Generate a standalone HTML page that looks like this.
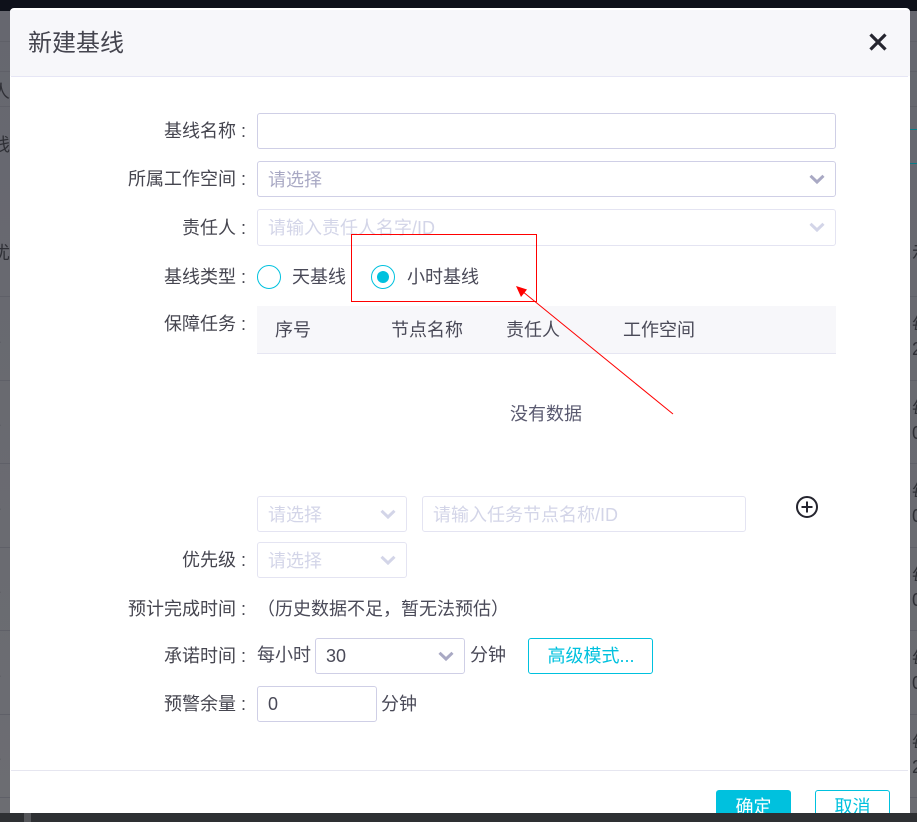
<!DOCTYPE html>
<html lang="zh">
<head>
<meta charset="utf-8">
<title>新建基线</title>
<style>
html,body{margin:0;padding:0;width:917px;height:822px;overflow:hidden;background:#6b6c72}
body{position:relative;font-family:"Liberation Sans","Noto Sans CJK SC",sans-serif;font-size:18px;color:#4a4a58}
.a{position:absolute}
.t{position:absolute;white-space:nowrap;line-height:26px;height:26px}
.l{position:absolute;right:671px;white-space:nowrap;line-height:26px;height:26px;color:#45454f}
.b{position:absolute;box-sizing:border-box;background:#fff;border:1px solid #cfcfe6;border-radius:3px}
.d{border-color:#e4e4f2}
.ph{color:#a9a9c4}
.ph2{color:#d3d5e8}
svg{position:absolute;overflow:visible}
.bgt{position:absolute;white-space:nowrap;color:#2f3036;line-height:24px}
.bgl{position:absolute;height:1px;background:#5f6068}
</style>
</head>
<body>
<!-- backdrop -->
<div class="a" style="left:0;top:0;width:917px;height:11px;background:#0e111a"></div>
<div class="a" style="left:0;top:11px;width:917px;height:802px;background:linear-gradient(#66676f,#6c6d72)"></div>
<div class="a" style="left:0;top:813px;width:917px;height:9px;background:#2e3033"></div>
<div class="a" style="left:24px;top:813px;width:7px;height:9px;background:#55565a"></div>
<div class="bgl" style="left:0;top:41px;width:917px"></div>
<div class="bgl" style="left:0;top:71px;width:917px"></div>
<div class="bgl" style="left:0;top:106px;width:917px"></div>
<div class="bgl" style="left:0;top:296px;width:917px"></div>
<div class="bgl" style="left:0;top:380px;width:917px"></div>
<div class="bgl" style="left:0;top:463px;width:917px"></div>
<div class="bgl" style="left:0;top:547px;width:917px"></div>
<div class="bgl" style="left:0;top:630px;width:917px"></div>
<div class="bgl" style="left:0;top:714px;width:917px"></div>
<div class="bgl" style="left:0;top:797px;width:917px"></div>
<div class="bgt" style="left:-8px;top:80px">人</div>
<div class="bgt" style="left:-8px;top:133px">线</div>
<div class="bgt" style="left:-8px;top:241px">优</div>
<div class="bgt" style="left:-9px;top:325px">1</div>
<div class="bgt" style="left:-9px;top:408px">1</div>
<div class="bgt" style="left:-9px;top:492px">1</div>
<div class="bgt" style="left:-9px;top:575px">1</div>
<div class="bgt" style="left:-9px;top:659px">1</div>
<div class="bgt" style="left:-9px;top:742px">1</div>
<div class="a" style="left:900px;top:129px;width:30px;height:35px;box-sizing:border-box;border:1px solid #0a7c88;border-radius:2px"></div>
<div class="bgt" style="left:912px;top:241px">示</div>
<div class="bgt" style="left:912px;top:313px">每</div><div class="bgt" style="left:912px;top:337px">2</div>
<div class="bgt" style="left:912px;top:397px">每</div><div class="bgt" style="left:912px;top:421px">0</div>
<div class="bgt" style="left:912px;top:480px">每</div><div class="bgt" style="left:912px;top:504px">0</div>
<div class="bgt" style="left:912px;top:564px">每</div><div class="bgt" style="left:912px;top:588px">0</div>
<div class="bgt" style="left:912px;top:647px">每</div><div class="bgt" style="left:912px;top:671px">0</div>
<div class="bgt" style="left:912px;top:731px">每</div><div class="bgt" style="left:912px;top:755px">2</div>

<!-- modal -->
<div class="a" style="left:10px;top:8px;width:900px;height:805px;background:#fff;border-radius:4px 4px 0 0;overflow:hidden">
  <div class="a" style="left:0;top:2px;width:900px;height:66px;background:#f7f7fa"></div>
  <div class="a" style="left:1px;top:68px;width:897px;height:1px;background:#e6e6f5"></div>
  <div class="a" style="left:1px;top:762px;width:897px;height:1px;background:#e6e6f0"></div>
</div>
<div class="t" style="left:28px;top:28px;font-size:24px;line-height:32px;height:32px;color:#45454f">新建基线</div>
<svg style="left:869px;top:33px" width="18" height="18" viewBox="0 0 18 18"><path d="M1.500 1.500 16.500 16.500M16.500 1.500 1.500 16.500" stroke="#25252f" stroke-width="3.200" fill="none"/></svg>

<!-- labels -->
<div class="l" style="top:118px">基线名称 :</div>
<div class="l" style="top:166px">所属工作空间 :</div>
<div class="l" style="top:215px">责任人 :</div>
<div class="l" style="top:264px">基线类型 :</div>
<div class="l" style="top:311px">保障任务 :</div>
<div class="l" style="top:547px">优先级 :</div>
<div class="l" style="top:596px">预计完成时间 :</div>
<div class="l" style="top:643px">承诺时间 :</div>
<div class="l" style="top:691px">预警余量 :</div>

<!-- fields -->
<div class="b" style="left:257px;top:113px;width:579px;height:36px"></div>
<div class="b" style="left:257px;top:161px;width:579px;height:36px"></div>
<div class="t ph" style="left:268px;top:167px">请选择</div>
<svg style="left:809px;top:174px" width="16" height="11" viewBox="0 0 16 11"><path d="M1.500 1.800 8 8 14.500 1.800" stroke="#a9a9c4" stroke-width="3" fill="none"/></svg>
<div class="b d" style="left:257px;top:209px;width:579px;height:37px"></div>
<div class="t ph2" style="left:268px;top:215px">请输入责任人名字/ID</div>
<svg style="left:809px;top:222px" width="16" height="11" viewBox="0 0 16 11"><path d="M1.500 1.800 8 8 14.500 1.800" stroke="#d3d5e8" stroke-width="3" fill="none"/></svg>

<!-- radios -->
<div class="a" style="left:257px;top:265px;width:24px;height:24px;box-sizing:border-box;border:1px solid #00c1de;border-radius:50%;background:#fff"></div>
<div class="t" style="left:292px;top:264px">天基线</div>
<div class="a" style="left:371px;top:265px;width:24px;height:24px;box-sizing:border-box;border:1px solid #00c1de;border-radius:50%;background:#fff"></div>
<div class="a" style="left:377px;top:271px;width:12px;height:12px;border-radius:50%;background:#00c1de"></div>
<div class="t" style="left:407px;top:264px">小时基线</div>

<!-- table -->
<div class="a" style="left:257px;top:306px;width:579px;height:47px;background:#f7f7fa"></div>
<div class="a" style="left:257px;top:353px;width:579px;height:1px;background:#e6e6f2"></div>
<div class="t" style="left:275px;top:317px">序号</div>
<div class="t" style="left:391px;top:317px">节点名称</div>
<div class="t" style="left:506px;top:317px">责任人</div>
<div class="t" style="left:623px;top:317px">工作空间</div>
<div class="t" style="left:510px;top:401px;color:#5a5a70">没有数据</div>

<!-- task row -->
<div class="b d" style="left:257px;top:496px;width:150px;height:36px"></div>
<div class="t ph2" style="left:268px;top:502px">请选择</div>
<svg style="left:380px;top:509px" width="16" height="11" viewBox="0 0 16 11"><path d="M1.500 1.800 8 8 14.500 1.800" stroke="#d3d5e8" stroke-width="3" fill="none"/></svg>
<div class="b d" style="left:422px;top:496px;width:324px;height:36px"></div>
<div class="t ph2" style="left:433px;top:502px">请输入任务节点名称/ID</div>
<svg style="left:796px;top:496px" width="22" height="22" viewBox="0 0 22 22"><circle cx="11" cy="11" r="10" stroke="#25252f" stroke-width="2" fill="none"/><path d="M11 5.500V16.500M5.500 11H16.500" stroke="#25252f" stroke-width="2" fill="none"/></svg>

<!-- priority -->
<div class="b d" style="left:257px;top:542px;width:150px;height:36px"></div>
<div class="t ph2" style="left:268px;top:548px">请选择</div>
<svg style="left:380px;top:555px" width="16" height="11" viewBox="0 0 16 11"><path d="M1.500 1.800 8 8 14.500 1.800" stroke="#d3d5e8" stroke-width="3" fill="none"/></svg>

<div class="t" style="left:257px;top:596px">（历史数据不足，暂无法预估）</div>

<!-- commit -->
<div class="t" style="left:257px;top:642px">每小时</div>
<div class="b" style="left:315px;top:638px;width:150px;height:36px"></div>
<div class="t" style="left:326px;top:643px">30</div>
<svg style="left:438px;top:651px" width="16" height="11" viewBox="0 0 16 11"><path d="M1.500 1.800 8 8 14.500 1.800" stroke="#a9a9c4" stroke-width="3" fill="none"/></svg>
<div class="t" style="left:470px;top:642px">分钟</div>
<div class="a" style="left:528px;top:638px;width:125px;height:36px;box-sizing:border-box;border:1px solid #00c1de;border-radius:3px;color:#00c1de;text-align:center;line-height:35px;padding-left:1px">高级模式...</div>

<!-- warn -->
<div class="b" style="left:257px;top:686px;width:120px;height:36px"></div>
<div class="t" style="left:268px;top:691px">0</div>
<div class="t" style="left:381px;top:691px">分钟</div>

<!-- footer buttons -->
<div class="a" style="left:716px;top:790px;width:75px;height:23px;overflow:hidden;background:#00c1de;border-radius:3px 3px 0 0;color:#fff;text-align:center;line-height:34px">确定</div>
<div class="a" style="left:815px;top:790px;width:75px;height:23px;overflow:hidden;box-sizing:border-box;border:1px solid #00c1de;border-bottom:0;border-radius:3px 3px 0 0;color:#00c1de;text-align:center;line-height:32px">取消</div>

<!-- annotation -->
<div class="a" style="left:351px;top:234px;width:186px;height:68px;box-sizing:border-box;border:1px solid #f00"></div>
<svg style="left:0;top:0" width="917" height="822" viewBox="0 0 917 822"><path d="M673 414 522 291" stroke="#f00" stroke-width="1" fill="none"/><path d="M516 286 527 289.500 521 297Z" fill="#f00"/></svg>
</body>
</html>
